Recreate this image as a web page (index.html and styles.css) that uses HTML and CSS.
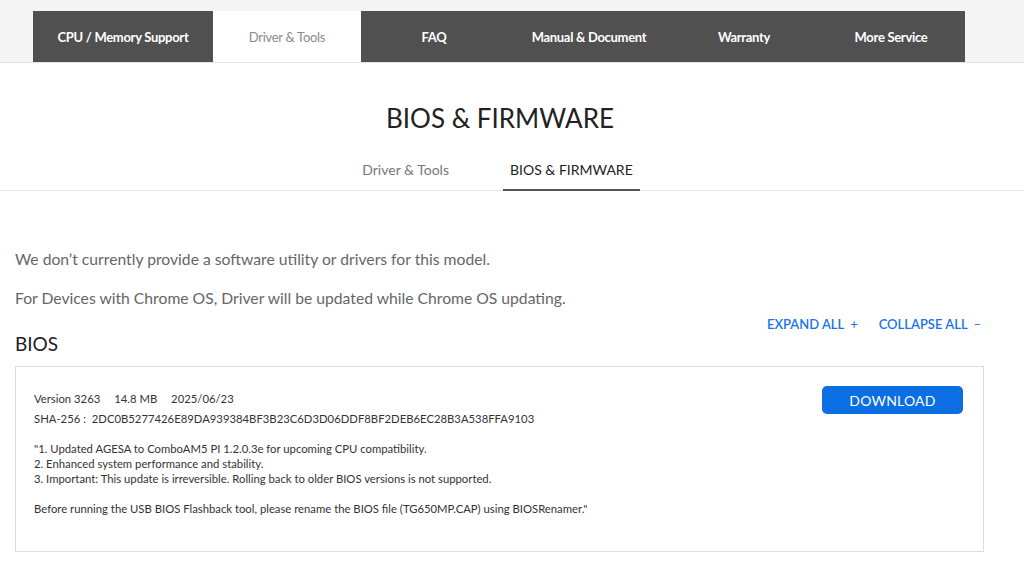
FILE: index.html
```html
<!DOCTYPE html>
<html lang="en">
<head>
  <meta charset="UTF-8" />
  <title>BIOS &amp; Firmware</title>
  <link rel="stylesheet" href="styles.css">
</head>
<body>
  <div class="top-area">
    <nav class="service-nav">
      <a href="#" class="nav-tab tab-cpu">CPU / Memory Support</a>
      <a href="#" class="nav-tab tab-driver active">Driver &amp; Tools</a>
      <a href="#" class="nav-tab tab-faq">FAQ</a>
      <a href="#" class="nav-tab tab-manual">Manual &amp; Document</a>
      <a href="#" class="nav-tab tab-warranty">Warranty</a>
      <a href="#" class="nav-tab tab-more">More Service</a>
    </nav>
  </div>

  <h1 class="page-title">BIOS &amp; FIRMWARE</h1>

  <div class="sub-tabs">
    <a href="#" class="sub-tab">Driver &amp; Tools</a>
    <a href="#" class="sub-tab active">BIOS &amp; FIRMWARE</a>
  </div>

  <div class="content">
    <p class="notice">We don’t currently provide a software utility or drivers for this model.</p>
    <p class="notice">For Devices with Chrome OS, Driver will be updated while Chrome OS updating.</p>

    <div class="toggle-row">
      <a href="#" class="toggle">EXPAND ALL <span class="sign">+</span></a>
      <a href="#" class="toggle">COLLAPSE ALL <span class="sign">–</span></a>
    </div>

    <h2 class="section-title">BIOS</h2>

    <div class="bios-card">
      <div class="bios-info">
        <div class="meta">
          <span>Version 3263</span>
          <span>14.8 MB</span>
          <span>2025/06/23</span>
        </div>
        <div class="sha">SHA-256 :&nbsp; 2DC0B5277426E89DA939384BF3B23C6D3D06DDF8BF2DEB6EC28B3A538FFA9103</div>
        <div class="notes">
          <p>"1. Updated AGESA to ComboAM5 PI 1.2.0.3e for upcoming CPU compatibility.<br>
          2. Enhanced system performance and stability.<br>
          3. Important: This update is irreversible. Rolling back to older BIOS versions is not supported.</p>
          <p>Before running the USB BIOS Flashback tool, please rename the BIOS file (TG650MP.CAP) using BIOSRenamer."</p>
        </div>
      </div>
      <button class="download-btn">DOWNLOAD</button>
    </div>
  </div>
</body>
</html>
```

FILE: styles.css
```css
/* Page base */
body {
  margin: 0;
  font-family: Lato, "Open Sans", Arial, sans-serif;
  color: #333;
  background: #fff;
}

a {
  text-decoration: none;
  color: inherit;
}

/* Grey top area with the service nav */
.top-area {
  background: #f4f4f4;
  border-bottom: 1px solid #e4e4e4;
  padding: 11px 0 0 33px;
}

.service-nav {
  display: flex;
  width: 932px;
  height: 51px;
  background: #505050;
}

.nav-tab {
  display: flex;
  align-items: center;
  justify-content: center;
  color: #fff;
  font-size: 13px;
  font-weight: 700;
  letter-spacing: -0.3px;
}

.nav-tab.active {
  background: #fff;
  color: #8a8a8a;
  font-weight: 400;
}

.tab-cpu { width: 180px; }
.tab-driver { width: 148px; }
.tab-faq { width: 146px; }
.tab-manual { width: 164px; }
.tab-warranty { width: 146px; }
.tab-more { width: 148px; }

/* Title and sub tabs */
.page-title {
  margin: 38px 0 0;
  padding-right: 24px;
  text-align: center;
  font-size: 26px;
  font-weight: 400;
  line-height: 34px;
  color: #222;
}

.sub-tabs {
  display: flex;
  justify-content: center;
  gap: 54px;
  margin-top: 22px;
  border-bottom: 1px solid #e6e6e6;
  padding-right: 22px;
}

.sub-tab {
  font-size: 14px;
  color: #777;
  padding: 4px 0 12px;
}

.sub-tab.active {
  color: #222;
  border-bottom: 2px solid #555;
  padding: 4px 7px 10px;
  margin-bottom: -1px;
}

/* Main content */
.content {
  padding: 0 40px 0 15px;
}

.notice {
  margin: 0;
  font-size: 15.7px;
  color: #666;
  line-height: 20px;
}

.notice:first-child {
  margin-top: 58px;
}

.notice + .notice {
  margin-top: 19px;
}

.toggle-row {
  display: flex;
  justify-content: flex-end;
  gap: 21px;
  margin: 8px 3px 0 0;
  font-size: 13px;
  line-height: 16px;
}

.toggle {
  color: #1a73e8;
  font-weight: 600;
}

.toggle .sign {
  font-weight: 400;
  margin-left: 3px;
}

.section-title {
  margin: 0;
  font-size: 19px;
  font-weight: 400;
  line-height: 24px;
  color: #222;
}

.bios-card {
  display: flex;
  justify-content: space-between;
  align-items: flex-start;
  margin-top: 10px;
  border: 1px solid #dcdcdc;
  padding: 19px 20px 35px 18px;
}

.bios-info {
  padding-top: 5px;
  font-size: 11.3px;
  color: #333;
  line-height: 15px;
}

.meta span {
  margin-right: 11px;
}

.sha {
  margin-top: 5px;
}

.notes p {
  margin: 15px 0 0;
}

.download-btn {
  width: 141px;
  height: 28px;
  background: #0b6ee2;
  border: none;
  border-radius: 5px;
  color: #fff;
  font-family: Lato, Arial, sans-serif;
  font-size: 14px;
  letter-spacing: 0.2px;
  cursor: pointer;
}
```
